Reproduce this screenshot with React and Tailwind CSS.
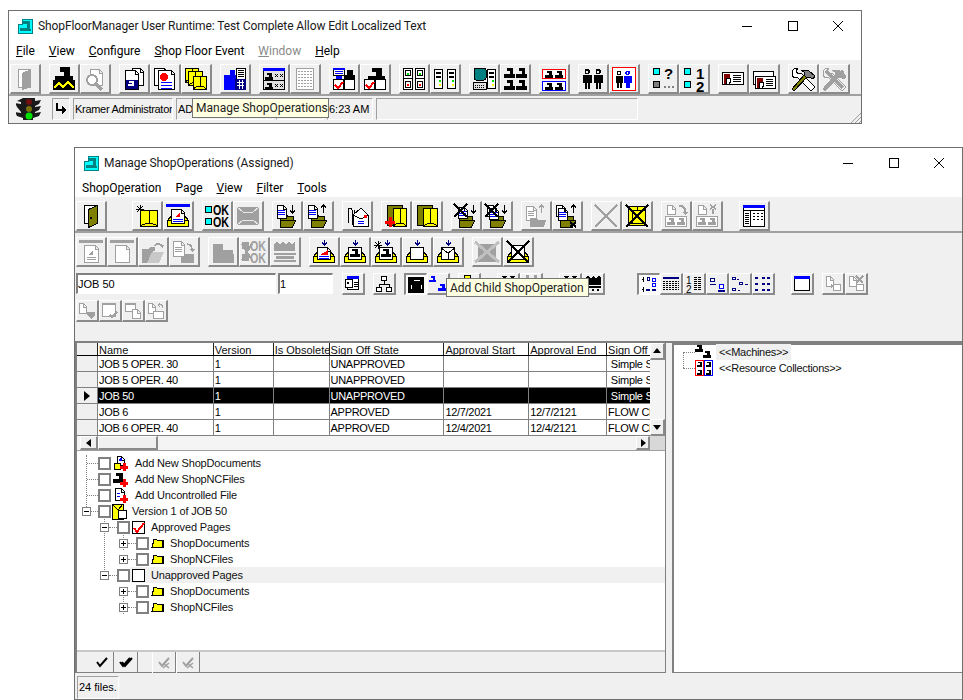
import React from 'react';

const Y = '#ffff00';
const OL = '#808000';
const NV = '#000080';
const BL = '#0000ff';
const RD = '#ff0000';
const CY = '#00ffff';
const GR = '#a0a0a0';

const Box = ({ x, y, w, h, f = '#fff', s = '#000' }) => (
  <rect x={x + 0.5} y={y + 0.5} width={w - 1} height={h - 1} fill={f} stroke={s} />
);
const Mach = ({ x = 0, y = 0, k = 1, c = '#000' }) => (
  <path transform={`translate(${x} ${y}) scale(${k})`} d="M3 0h7v6h2v4H0V6h6V3H3z" fill={c} />
);
const Lines = ({ x, y, w, n = 3, gap = 2, c = BL }) => (
  <path d={Array.from({ length: n }, (_, i) => `M${x} ${y + i * gap + 0.5}h${w}`).join('')} stroke={c} fill="none" />
);
const Doc = ({ x, y, w = 10, h = 14, s = '#000' }) => (
  <path d={`M${x + 0.5} ${y + 0.5}h${w - 4}l3 3v${h - 4}h-${w - 1}z M${x + w - 4} ${y + 1}v3h3`} fill="#fff" stroke={s} />
);
const Tray = ({ c = Y, s = '#000' }) => (
  <>
    <path d="M1.5 16.5l4-5h13l4 5v6h-21z" fill={c} stroke={s} />
    <path d="M2 16.5h5v3h10v-3h5" fill="none" stroke={s} />
  </>
);
const Crate = ({ x, y, w, h, f = Y, s = '#000' }) => (
  <>
    <Box x={x} y={y} w={w} h={h} f={f} s={s} />
    <path d={`M${x + w / 2} ${y}v${h - 4}M${x} ${y + h - 1}l${w / 2 - 2} -3h4l${w / 2 - 2} 3`} fill="none" stroke={s} />
  </>
);
const Folder = ({ x = 0, y = 0, c = OL, s = '#000' }) => (
  <path transform={`translate(${x} ${y})`} d="M.5 9.5v-6h6l1 2h6v4zM.5 9.5h15l-3 7h-12z" fill={c} stroke={s} />
);
const Arrow = ({ x, y, up = false, c = '#000', h = 6 }) => (
  <path
    d={up ? `M${x + 0.5} ${y + h}V${y}M${x - 2} ${y + 3}l2.5-3 2.5 3` : `M${x + 0.5} ${y}v${h}M${x - 2} ${y + h - 3}l2.5 3 2.5-3`}
    fill="none"
    stroke={c}
    strokeWidth="1.2"
  />
);
const Cross = ({ c = '#000', w = 2.5, a = 1, b = 23 }) => (
  <path d={`M${a} ${a}L${b} ${b}M${b} ${a}L${a} ${b}`} stroke={c} strokeWidth={w} fill="none" />
);
const Person = ({ x, c = '#000' }) => (
  <path
    transform={`translate(${x} 2)`}
    d="M2.5 0h3l1 1v3l-1 1h-3l-1-1V1zM0 6h8l1 1v7H7v6H5v-6H4v6H2v-6H0z M3 1.500h2v2.500h-2z"
    fill={c}
    fillRule="evenodd"
  />
);
const Tower = ({ x, y, led = '#00e000', led2 = Y }) => (
  <>
    <Box x={x} y={y} w={9} h={20} />
    <rect x={x + 2} y={y + 3} width={5} height={2} fill="#000" />
    <rect x={x + 2} y={y + 7} width={5} height={2} fill="#000" />
    <rect x={x + 5} y={y + 11} width={2} height={2} fill={led} />
    <rect x={x + 5} y={y + 15} width={2} height={2} fill={led2} />
  </>
);
const CheckBox = ({ x, y }) => (
  <>
    <Box x={x} y={y} w={11} h={11} />
    <path d={`M${x + 2} ${y + 6}l3 3 5-6`} stroke={RD} strokeWidth="2" fill="none" />
  </>
);
const Card = ({ x, y, w = 20 }) => (
  <>
    <Box x={x} y={y} w={w} h={13} />
    <path d={`M${x + 2} ${y + 2}h6v4l-3 6h-3z`} fill="#800000" />
    <path d={`M${x + 4} ${y + 6}h4l1 3-2 3h-3z`} fill="#fff" stroke="#000" />
    <Lines x={x + 11} y={y + 3} w={w - 14} n={4} c="#000" />
  </>
);
const Tools = ({ c1 = '#fff', c2 = OL, c3 = '#808080', s = '#000' }) => (
  <>
    <path d="M1 4l3-3h3L5 4l2 3 3-1 13 13v2l-2 2h-2L6 10l-2 1-3-2z" fill={c1} stroke={s} />
    <path d="M3 24l-2-2L14 7l3 2z" fill={c2} stroke={s} />
    <path d="M10 3h7l7 6-2 3-4-2-2 1-3-3V5z" fill={c3} stroke={s} />
  </>
);
const Ok = ({ y, c = CY, t = '#000' }) => (
  <>
    <Box x={0} y={y + 2} w={7} h={7} f={c} s={t} />
    <text x="8" y={y + 11} fontFamily="Liberation Sans, sans-serif" fontWeight="700" fontSize="14" textLength="16" lengthAdjust="spacingAndGlyphs" fill={t}>OK</text>
  </>
);

// big toolbar pictures are on a 24 grid, small ones on an 18 grid
const ICONS = {
  doorOff: (
    <>
      <Box x={5} y={2} w={13} h={19} s={GR} />
      <path d="M9 6l9-4v18l-9 3z" fill={GR} />
    </>
  ),
  door: (
    <>
      <Box x={5} y={1} w={13} h={19} />
      <path d="M9.500 5.500l9-4v18l-9 4z" fill={OL} stroke="#000" />
      <rect x={11} y={13} width={2} height={2} fill="#000" />
    </>
  ),
  machWave: (
    <>
      <Mach x={3} y={0} k={1.5} />
      <rect x={1} y={13} width={22} height={10} fill="#000" />
      <path d="M2 21l5-5 4 4 5-5 6 6" stroke={Y} strokeWidth="1.500" fill="none" />
    </>
  ),
  magOff: (
    <>
      <Doc x={7} y={2} w={13} h={17} s={GR} />
      <circle cx={9} cy={13} r={5} fill="#fff" stroke={GR} strokeWidth="2" />
      <path d="M13 17l6 6" stroke={GR} strokeWidth="3" />
    </>
  ),
  docsMach: (
    <>
      <Doc x={10} y={1} w={12} h={18} />
      <Doc x={3} y={3} w={14} h={20} />
      <rect x={4} y={13} width={12} height={9} fill={NV} />
      <path d="M7 14h5v5H6v-2h4v-1H7z" fill="#fff" />
    </>
  ),
  docsRed: (
    <>
      <Doc x={1} y={1} w={14} h={18} />
      <Doc x={5} y={3} w={17} h={20} />
      <circle cx={11} cy={10} r={4} fill={RD} />
      <Lines x={8} y={15} w={11} n={3} gap={3} />
    </>
  ),
  crates: (
    <>
      <Crate x={1} y={1} w={14} h={15} />
      <Crate x={4} y={4} w={15} h={15} />
      <Crate x={9} y={9} w={14} h={14} />
    </>
  ),
  calc: (
    <>
      <Box x={13} y={1} w={10} h={12} />
      <Lines x={15} y={3} w={6} n={4} c="#000" />
      <rect x={7} y={3} width={5} height={5} fill={BL} />
      <rect x={1} y={8} width={12} height={15} fill={BL} />
      <rect x={12} y={12} width={11} height={11} fill={NV} />
      <path d="M14 15h7M14 18h7M16 13v9M19 13v9" stroke="#fff" />
    </>
  ),
  tableMach: (
    <>
      <Box x={1} y={1} w={22} h={22} f="#e0e0e0" />
      <rect x={1} y={1} width={22} height={3} fill={BL} />
      <path d="M1 13.500h22" stroke="#000" />
      <Mach x={3} y={6} k={0.7} />
      <Mach x={3} y={16} k={0.7} />
      <path d="M13 7l3 3m0-3l-3 3M18 7l3 3m0-3l-3 3M13 17l3 3m0-3l-3 3M18 17l3 3m0-3l-3 3" stroke="#000" />
    </>
  ),
  tableOff: (
    <>
      <Box x={3} y={1} w={18} h={22} s={GR} />
      <path d="M5 4h14M5 7h14M5 10h14M5 13h14M5 16h14M5 19h14" stroke={GR} strokeDasharray="2 1" />
    </>
  ),
  planCheck: (
    <>
      <Box x={1} y={1} w={12} h={8} />
      <rect x={1} y={1} width={12} height={2} fill={BL} />
      <Lines x={3} y={4} w={8} n={2} c={BL} />
      <path d="M4 9h6v3H4z" fill={BL} />
      <Mach x={12} y={3} k={0.9} />
      <rect x={15} y={5} width={6} height={8} fill="#000" />
      <CheckBox x={1} y={12} />
      <Box x={12} y={12} w={11} h={11} />
    </>
  ),
  machCheck: (
    <>
      <Mach x={5} y={1} k={1.4} />
      <CheckBox x={1} y={12} />
      <Box x={12} y={12} w={11} h={11} />
    </>
  ),
  panel4: (
    <>
      <Box x={1} y={1} w={10} h={22} />
      <Box x={13} y={1} w={10} h={22} />
      <path d="M1 11.500h10M13 11.500h10" stroke="#000" />
      <Box x={3} y={3} w={6} h={6} f="none" />
      <Box x={15} y={3} w={6} h={6} f="none" />
      <Box x={3} y={14} w={6} h={7} f="none" />
      <Box x={15} y={14} w={6} h={7} f="none" />
      <rect x={5} y={6} width={2} height={2} fill="#00e000" />
      <rect x={17} y={6} width={2} height={2} fill="#00e000" />
      <rect x={5} y={17} width={2} height={2} fill={RD} />
      <rect x={17} y={17} width={2} height={2} fill={RD} />
    </>
  ),
  towers: (
    <>
      <Tower x={1} y={2} />
      <Tower x={14} y={2} />
    </>
  ),
  computer: (
    <>
      <rect x={2} y={1} width={12} height={12} rx={2} fill="#008080" stroke="#000" />
      <Box x={1} y={15} w={14} h={8} f="#e0e0e0" />
      <path d="M3 18h10M3 20h10" stroke="#000" strokeDasharray="1 1" />
      <Tower x={15} y={2} />
    </>
  ),
  machs4: (
    <>
      <Mach x={1} y={1} k={0.92} />
      <Mach x={13} y={1} k={0.92} />
      <Mach x={1} y={13} k={0.92} />
      <Mach x={13} y={13} k={0.92} />
      <rect x={1} y={7} width={11} height={4} />
      <rect x={13} y={7} width={11} height={4} />
      <rect x={1} y={19} width={11} height={4} />
      <rect x={13} y={19} width={11} height={4} />
    </>
  ),
  machsRB: (
    <>
      <Box x={0} y={2} w={24} h={10} s={RD} />
      <Box x={0} y={14} w={24} h={10} s={BL} />
      <Mach x={3} y={4} k={0.65} />
      <Mach x={13} y={4} k={0.65} />
      <Mach x={3} y={16} k={0.65} />
      <Mach x={13} y={16} k={0.65} />
    </>
  ),
  people: (
    <>
      <Person x={2} />
      <Person x={13} />
    </>
  ),
  peopleRB: (
    <>
      <Box x={0} y={0} w={24} h={24} s={RD} />
      <g transform="translate(2 2) scale(.85)">
        <Person x={2} />
        <Person x={12} c={BL} />
      </g>
    </>
  ),
  cyanQ: (
    <>
      <Box x={2} y={1} w={7} h={7} f={CY} />
      <Box x={2} y={14} w={7} h={7} f="#808080" />
      <text x="13" y="12" fontFamily="Liberation Sans, sans-serif" fontWeight="700" fontSize="15" fill="#000">?</text>
      <path d="M13 20h2M17 20h2M21 20h2" stroke="#808080" strokeWidth="2" />
    </>
  ),
  cyan12: (
    <>
      <Box x={2} y={1} w={7} h={7} f={CY} />
      <Box x={2} y={14} w={7} h={7} f={CY} />
      <text x="14" y="12" fontFamily="Liberation Sans, sans-serif" fontWeight="700" fontSize="15" fill="#000">1</text>
      <text x="14" y="25" fontFamily="Liberation Sans, sans-serif" fontWeight="700" fontSize="15" fill="#000">2</text>
    </>
  ),
  card: <Card x={1} y={5} w={22} />,
  cards: (
    <>
      <Box x={1} y={4} w={21} h={14} />
      <Card x={3} y={9} w={21} />
    </>
  ),
  tools: <Tools />,
  toolsOff: (
    <>
      <Tools c1="#f0f0f0" c2={GR} c3={GR} s={GR} />
      <Cross c={GR} w={3} a={4} b={21} />
    </>
  ),
  starCrate: (
    <>
      <path d="M5 1v8M1 5h8M2 2l6 6M8 2L2 8" stroke="#000" />
      <Crate x={5} y={6} w={18} h={17} />
    </>
  ),
  barTray: (
    <>
      <rect x={0} y={0} width={24} height={3} fill={BL} />
      <Tray />
      <Doc x={5} y={5} w={14} h={15} />
      <path d="M9 13l5-5v5z" fill={RD} />
      <Lines x={7} y={15} w={10} n={2} />
    </>
  ),
  okOk: (
    <>
      <Ok y={0} />
      <Ok y={12} />
    </>
  ),
  boxOff: (
    <>
      <rect x={1} y={3} width={22} height={18} fill={GR} />
      <path d="M1 3l6 5h10l6-5M1 21l6-5h10l6 5" stroke="#e8e8e8" fill="none" />
    </>
  ),
  folderDown: (
    <>
      <Folder x={5} y={7} />
      <Doc x={2} y={1} w={10} h={14} />
      <Lines x={3} y={6} w={7} n={3} />
      <Arrow x={17} y={1} h={8} />
    </>
  ),
  folderUp: (
    <>
      <Folder x={5} y={7} />
      <Doc x={2} y={1} w={10} h={14} />
      <Lines x={3} y={6} w={7} n={3} />
      <Arrow x={17} y={1} up h={8} />
    </>
  ),
  clipMail: (
    <>
      <path d="M3 19V6a2 2 0 014 0v14a1 1 0 002 0V6" fill="none" stroke="#000" />
      <path d="M8 11l8-7 7 7v11H8z" fill="#fff" stroke="#000" />
      <path d="M8 11l8 4 7-4" fill="none" stroke="#000" />
      <rect x={19} y={11} width={3} height={3} fill={RD} />
      <Lines x={13} y={17} w={6} n={2} />
    </>
  ),
  cratePlus: (
    <>
      <rect x={3} y={1} width={15} height={20} fill={OL} stroke="#000" />
      <Crate x={9} y={4} w={14} h={19} />
      <path d="M6 13v10M1 18h10" stroke={RD} strokeWidth="3" />
    </>
  ),
  cratePair: (
    <>
      <rect x={2} y={1} width={15} height={20} fill={OL} stroke="#000" />
      <Crate x={8} y={4} w={15} h={19} />
    </>
  ),
  xFolder: (
    <>
      <Folder x={5} y={7} />
      <Doc x={4} y={3} w={10} h={12} />
      <Lines x={5} y={7} w={7} n={3} />
      <Arrow x={19} y={1} h={8} />
      <path d="M0 0l13 13M13 0L0 13" stroke="#000" strokeWidth="2" />
    </>
  ),
  xFolder2: (
    <>
      <Folder x={5} y={7} />
      <Doc x={2} y={1} w={10} h={12} />
      <Doc x={4} y={4} w={10} h={12} />
      <Lines x={5} y={8} w={7} n={3} />
      <Arrow x={19} y={1} h={8} />
      <path d="M0 0l13 13M13 0L0 13" stroke="#000" strokeWidth="2" />
    </>
  ),
  upOff: (
    <>
      <Doc x={2} y={2} w={11} h={15} s={GR} />
      <Lines x={4} y={7} w={6} n={3} c={GR} />
      <Arrow x={17} y={1} up c={GR} h={8} />
      <path d="M6 14h6l2 2h8l-2 7H6z" fill={GR} />
    </>
  ),
  upX: (
    <>
      <Folder x={5} y={7} />
      <Doc x={1} y={1} w={10} h={12} />
      <Doc x={3} y={4} w={10} h={13} />
      <Lines x={4} y={8} w={7} n={3} />
      <Arrow x={18} y={1} up h={8} />
      <path d="M15 18l6 5m0-5l-6 5" stroke="#000" strokeWidth="2" />
    </>
  ),
  xOff: <Cross c={GR} w={2} />,
  crateX: (
    <>
      <Crate x={3} y={2} w={18} h={20} />
      <Box x={7} y={6} w={14} h={14} f={Y} />
      <Cross />
    </>
  ),
  docDownMachOff: (
    <>
      <Doc x={3} y={1} w={9} h={10} s={GR} />
      <path d="M15 2h3l3 3v4" fill="none" stroke={GR} strokeWidth="1.500" />
      <path d="M18 8l3 3 3-3" fill={GR} />
      <Box x={1} y={12} w={22} h={11} s={GR} />
      <Mach x={3} y={14} k={0.7} c={GR} />
      <Mach x={13} y={14} k={0.7} c={GR} />
    </>
  ),
  docXMachOff: (
    <>
      <Doc x={3} y={1} w={9} h={10} s={GR} />
      <path d="M15 1l6 4m0-4l-6 4M18 5v5" stroke={GR} strokeWidth="1.500" />
      <Box x={1} y={12} w={22} h={11} s={GR} />
      <Mach x={3} y={14} k={0.7} c={GR} />
      <Mach x={13} y={14} k={0.7} c={GR} />
    </>
  ),
  tableWin: (
    <>
      <Box x={1} y={1} w={22} h={22} />
      <rect x={1} y={1} width={22} height={3} fill={BL} />
      <path d="M1 6.500h22M8.500 6v16" stroke="#000" />
      <Lines x={3} y={9} w={4} n={6} gap={2} c="#000" />
      <path d="M11 9h2M15 9h2M19 9h2M11 12h2M15 12h2M19 12h2M11 15h2M15 15h2M19 15h2" stroke="#000" />
    </>
  ),
  barDocOff: (
    <>
      <rect x={0} y={0} width={24} height={3} fill={GR} />
      <Doc x={5} y={5} w={15} h={18} s={GR} />
      <path d="M9 15l5-5v5z" fill={GR} />
      <Lines x={8} y={17} w={9} n={2} c={GR} />
    </>
  ),
  barBlankOff: (
    <>
      <rect x={0} y={0} width={24} height={3} fill={GR} />
      <Doc x={5} y={5} w={15} h={18} s={GR} />
    </>
  ),
  folderOff: (
    <>
      <path d="M1 9h7l1-2h5v4h-2L6 23H1z" fill={GR} />
      <path d="M6 23l5-11h12l-5 11z" fill="#c8c8c8" />
      <path d="M13 6c3-3 6-3 8 0" fill="none" stroke={GR} strokeWidth="1.500" />
      <path d="M19 7l3 1 1-3" fill={GR} />
    </>
  ),
  docsArrowOff: (
    <>
      <Doc x={1} y={1} w={12} h={16} s={GR} />
      <Lines x={3} y={7} w={7} n={3} c={GR} />
      <path d="M15 4c3 0 5 2 5 6" fill="none" stroke={GR} strokeWidth="1.500" />
      <path d="M17 9l3 3 3-3" fill={GR} />
      <path d="M9 17h4v-3h9v9H9z" fill={GR} />
    </>
  ),
  machBoxOff: (
    <>
      <rect x={2} y={4} width={10} height={10} fill={GR} />
      <rect x={2} y={14} width={21} height={9} fill={GR} />
      <rect x={12} y={10} width={10} height={5} fill={GR} />
    </>
  ),
  okMachOff: (
    <>
      <Ok y={0} c={GR} t={GR} />
      <Ok y={12} c={GR} t={GR} />
      <path d="M0 4l10 16M10 4L0 20" stroke={GR} strokeWidth="2" />
    </>
  ),
  carOff: (
    <>
      <path d="M1 4l3-2 3 2 3-2 3 2 3-2 3 2 3-2v9H1z" fill={GR} />
      <rect x={1} y={13} width={22} height={2} fill={GR} />
      <rect x={3} y={16} width={18} height={3} fill={GR} />
      <path d="M1 21h22" stroke={GR} strokeWidth="2" />
    </>
  ),
  trayChart: (
    <>
      <Arrow x={12} y={0} c={NV} h={5} />
      <Tray />
      <Doc x={5} y={7} w={14} h={13} />
      <path d="M8 15l8-5v5z" fill={RD} />
      <Lines x={7} y={16} w={10} n={2} />
    </>
  ),
  trayMach: (
    <>
      <Arrow x={12} y={0} c={NV} h={5} />
      <Tray />
      <Box x={5} y={7} w={14} h={13} />
      <Mach x={7} y={9} k={0.8} />
    </>
  ),
  trayStar: (
    <>
      <path d="M4 1v8M0 5h8M1 2l6 6M7 2L1 8" stroke="#000" />
      <Arrow x={13} y={0} c={NV} h={5} />
      <Tray />
      <Box x={5} y={7} w={14} h={13} />
      <Mach x={7} y={9} k={0.8} />
    </>
  ),
  trayBlank: (
    <>
      <Arrow x={12} y={0} c={NV} h={5} />
      <Tray />
      <Box x={5} y={7} w={14} h={13} />
    </>
  ),
  trayEnv: (
    <>
      <Arrow x={12} y={0} c={NV} h={5} />
      <Tray />
      <Box x={5} y={7} w={14} h={13} />
      <path d="M5 8l7 5 7-5M12 13v7" stroke="#000" fill="none" />
    </>
  ),
  crateOffX: (
    <>
      <rect x={3} y={4} width={18} height={18} fill={GR} />
      <path d="M0 2l24 20M24 2L0 22" stroke="#c0c0c0" strokeWidth="3" />
    </>
  ),
  trayX: (
    <>
      <Tray />
      <Box x={5} y={5} w={14} h={15} />
      <Cross w={2} />
    </>
  ),
  sTableA: (
    <>
      <Box x={3} y={1} w={12} h={14} />
      <rect x={3} y={1} width={12} height={3} fill={BL} />
      <Box x={1} y={4} w={8} h={9} f="#fff" />
      <path d="M3 7l2 2m0-2L3 9" stroke="#000" />
      <Lines x={10} y={7} w={4} n={3} c="#000" />
    </>
  ),
  sOrg: (
    <>
      <Box x={6} y={1} w={6} h={5} />
      <Box x={1} y={12} w={6} h={5} />
      <Box x={11} y={12} w={6} h={5} />
      <path d="M9 6v3M4 12V9.500h10V12" stroke="#000" fill="none" />
    </>
  ),
  sMachBlack: (
    <>
      <rect x={1} y={1} width={16} height={16} fill="#000" />
      <Mach x={4} y={4} k={0.9} c="#fff" />
      <Mach x={4.500} y={4.500} k={0.8} />
    </>
  ),
  sMachBlue: (
    <>
      <Mach x={0} y={1} k={0.6} c={BL} />
      <Mach x={9} y={9} k={0.7} c={BL} />
    </>
  ),
  sYellow: <Box x={4} y={0} w={7} h={6} f={Y} />,
  sHidden: <path d="M4 1l3 4M7 1L4 5M12 1l3 4M15 1l-3 4" stroke="#000" strokeWidth="2" />,
  sHidden2: <path d="M4 1h3M12 1h3M4 3h3M12 3h3" stroke={GR} strokeWidth="2" />,
  sCar: (
    <>
      <path d="M1 3l3-2 3 2 2-2 3 2 3-2 2 2v7H1z" fill="#000" />
      <rect x={1} y={11} width={16} height={2} fill="#000" />
      <path d="M3 15h2M8 15h2M13 15h2" stroke="#000" strokeWidth="2" />
    </>
  ),
  sTree: (
    <>
      <path d="M2 3h2M2 13h2M3 1v5M3 11v5" stroke="#000" />
      <Box x={7} y={1} w={3} h={4} s={NV} />
      <Box x={12} y={2} w={4} h={4} s={BL} />
      <Box x={12} y={7} w={4} h={4} s={BL} />
      <path d="M6 14h4M12 14h4" stroke={NV} strokeWidth="2" />
    </>
  ),
  sGrid: (
    <>
      <rect x={1} y={2} width={16} height={2} fill={NV} />
      <path d="M1 6h16M1 8h16M1 10h16M1 12h16M1 14h16" stroke="#000" strokeDasharray="2 1" />
    </>
  ),
  sNums: (
    <>
      <text x="1" y="9" fontFamily="Liberation Sans, sans-serif" fontSize="10" fill="#000">1</text>
      <text x="1" y="18" fontFamily="Liberation Sans, sans-serif" fontSize="10" fill="#000">2</text>
      <path d="M9 2h8M9 4h8M9 6h8M9 8h8M9 10h8M9 12h8M9 14h8" stroke="#000" strokeDasharray="3 1" />
    </>
  ),
  sLarge: (
    <>
      <Box x={2} y={3} w={5} h={4} s={NV} />
      <path d="M2 9h6" stroke={NV} />
      <Box x={11} y={9} w={5} h={5} s={BL} />
      <path d="M10 16h7" stroke={NV} strokeWidth="2" />
    </>
  ),
  sLinks: (
    <>
      <Box x={1} y={2} w={4} h={3} s={NV} />
      <Box x={8} y={7} w={4} h={3} s={NV} />
      <Box x={1} y={13} w={4} h={3} s={NV} />
      <path d="M6 4h2M14 9h3M7 15h2" stroke={NV} />
    </>
  ),
  sList: (
    <>
      <path d="M1 3h4M8 3h3M13 3h4M1 9h4M8 9h3M13 9h4M1 15h4M8 15h3M13 15h4" stroke={NV} strokeWidth="2" strokeDasharray="3 1" />
    </>
  ),
  sWin: (
    <>
      <Box x={1} y={1} w={16} h={15} />
      <rect x={1} y={1} width={16} height={3} fill={BL} />
    </>
  ),
  sDocsOff: (
    <>
      <Doc x={2} y={1} w={8} h={11} s={GR} />
      <Box x={9} y={9} w={8} h={7} s={GR} />
      <path d="M7 9l3 2-3 2z" fill={GR} />
    </>
  ),
  sXOff: (
    <>
      <Doc x={2} y={1} w={8} h={11} s={GR} />
      <Box x={9} y={9} w={8} h={7} s={GR} />
      <path d="M9 1l7 7m0-7L9 8" stroke={GR} strokeWidth="2" />
    </>
  ),
  sRowA: (
    <>
      <Doc x={1} y={1} w={8} h={11} s={GR} />
      <path d="M9 10h8v3l-4 4-4-4z" fill={GR} />
    </>
  ),
  sRowB: (
    <>
      <Box x={1} y={1} w={14} h={14} s={GR} />
      <rect x={1} y={1} width={14} height={2} fill={GR} />
      <path d="M9 13l2 2 5-5" stroke={GR} strokeWidth="2" fill="none" />
    </>
  ),
  sRowC: (
    <>
      <Box x={1} y={1} w={11} h={9} s={GR} />
      <rect x={1} y={1} width={11} height={2} fill={GR} />
      <Doc x={8} y={7} w={9} h={10} s={GR} />
    </>
  ),
  sRowD: (
    <>
      <Doc x={1} y={1} w={8} h={11} s={GR} />
      <path d="M11 3c3-1 5 0 5 3M11 3l2-2M11 3l2 2" stroke={GR} fill="none" />
      <Box x={6} y={9} w={11} h={8} s={GR} />
    </>
  ),
};

const Icon = ({ name, size = 24 }) => (
  <svg viewBox={`0 0 ${size} ${size}`} width={size} height={size} shapeRendering="crispEdges" className="block overflow-visible">
    {ICONS[name]}
  </svg>
);

function Btn({ icon, small = false, pressed = false }) {
  return (
    <div
      className={`flex shrink-0 items-center justify-center ${small ? 'h-[22px] w-[23px]' : 'h-[30px] w-[31px]'} ${
        pressed
          ? 'border-t-2 border-l-2 border-r border-b border-t-[#8a8a8a] border-l-[#8a8a8a] border-r-white border-b-white bg-[#fafafa]'
          : 'border-t border-l border-r-2 border-b-2 border-t-white border-l-white border-r-[#8a8a8a] border-b-[#8a8a8a] bg-[#f0f0f0]'
      }`}
    >
      {icon && <Icon name={icon} size={small ? 18 : 24} />}
    </div>
  );
}

function Group({ items, small }) {
  return (
    <div className="flex">
      {items.map((it, i) => (
        <Btn key={i} icon={it.replace('!', '')} small={small} pressed={it.startsWith('!')} />
      ))}
    </div>
  );
}

const AppIcon = () => (
  <svg viewBox="0 0 16 16" width="16" height="16" shapeRendering="crispEdges" className="shrink-0">
    <path d="M5 1h10v14H1V6h4z" fill={CY} stroke="#008080" />
    <path d="M6 3h7v8h1v2H3v-3h7V6H6z" fill="#008080" />
  </svg>
);

function TitleBar({ title }) {
  return (
    <div className="flex h-[30px] items-center bg-white">
      <div className="ml-2 flex min-w-0 flex-1 items-center gap-[5px]">
        <AppIcon />
        <span className="whitespace-nowrap font-['Roboto',sans-serif] text-[12px] tracking-[-0.1px] text-[#1a1a1a]">{title}</span>
      </div>
      <div className="flex h-full">
        <div className="flex w-[46px] items-center justify-center">
          <svg width="10" height="10" shapeRendering="crispEdges"><path d="M0 5.500h10" stroke="#000" /></svg>
        </div>
        <div className="flex w-[45px] items-center justify-center">
          <svg width="10" height="10" shapeRendering="crispEdges"><rect x=".5" y=".5" width="9" height="9" fill="none" stroke="#000" /></svg>
        </div>
        <div className="flex w-[46px] items-center justify-center">
          <svg width="10" height="10"><path d="M0 0l10 10M10 0L0 10" stroke="#000" /></svg>
        </div>
      </div>
    </div>
  );
}

function Menu({ items }) {
  return (
    <div className="flex h-[19px] items-center gap-[14px] bg-white pl-[7px] font-['Roboto',sans-serif] text-[12px] text-black">
      {items.map(([pre, key, post, off]) => (
        <span key={pre + key + post} className={off ? 'text-[#8a8a8a]' : ''}>
          {pre}<u>{key}</u>{post}
        </span>
      ))}
    </div>
  );
}

const Tip = ({ className, children }) => (
  <div className={`absolute z-10 flex items-center whitespace-nowrap border border-[#767676] bg-[#ffffe1] px-[3px] font-['Roboto',sans-serif] text-[12px] text-[#222] ${className}`}>
    {children}
  </div>
);

const Cell = ({ className = '', children }) => (
  <div className={`flex items-center overflow-hidden whitespace-nowrap border border-t-[#a0a0a0] border-l-[#a0a0a0] border-r-white border-b-white pl-[1px] font-['Liberation_Sans',sans-serif] text-[11px] text-black ${className}`}>
    {children}
  </div>
);

const TOP_BAR = [
  ['doorOff'], ['machWave', 'magOff'], ['docsMach', 'docsRed', 'crates'], ['calc'],
  ['tableMach', 'tableOff'], ['planCheck', 'machCheck'], ['panel4', 'towers'], ['computer', 'machs4'],
  ['machsRB'], ['people', 'peopleRB'], ['cyanQ', 'cyan12'], ['card', 'cards'], ['tools', 'toolsOff'],
];

const COLS = [
  ['Name', 'w-[116px]'], ['Version', 'w-[60px]'], ['Is Obsolete', 'w-[56px]'], ['Sign Off State', 'w-[115px]'],
  ['Approval Start', 'w-[85px]'], ['Approval End', 'w-[78px]'], ['Sign Off', 'w-[44px]'],
];

const ROWS = [
  ['JOB 5 OPER. 30', '1', '', 'UNAPPROVED', '', '', ' Simple Sign'],
  ['JOB 5 OPER. 40', '1', '', 'UNAPPROVED', '', '', ' Simple Sign'],
  ['JOB 50', '1', '', 'UNAPPROVED', '', '', ' Simple Sign'],
  ['JOB 6', '1', '', 'APPROVED', '12/7/2021', '12/7/2121', 'FLOW CHART'],
  ['JOB 6 OPER. 40', '1', '', 'APPROVED', '12/4/2021', '12/4/2121', 'FLOW CHART'],
];

const Scroll = ({ d, className = '' }) => (
  <div className={`flex items-center justify-center border-t border-l border-r-2 border-b-2 border-t-white border-l-white border-r-[#8a8a8a] border-b-[#8a8a8a] bg-[#f0f0f0] ${className}`}>
    <svg width="8" height="8"><path d={d} fill="#000" /></svg>
  </div>
);

function JobGrid() {
  return (
    <div className="flex h-[108px] flex-col border-b border-[#a0a0a0] bg-white">
      <div className="flex h-[93px]">
        <div className="flex w-[574px] flex-col overflow-hidden">
          <div className="flex h-[13px] items-center border-b border-black">
            <div className="h-full w-[20px] bg-[#f0f0f0]" />
            {COLS.map(([label, w]) => (
              <div key={label} className={`${w} h-full overflow-hidden whitespace-nowrap border-l border-[#222] pl-[1px] font-['Liberation_Sans',sans-serif] text-[11px] leading-[15px] text-[#111]`}>
                {label}
              </div>
            ))}
          </div>
          {ROWS.map((row, r) => (
            <div key={r} className={`flex h-[16px] border-b border-[#808080] ${r === 2 ? 'bg-black text-white' : 'text-black'}`}>
              <div className="flex h-full w-[20px] items-center justify-center bg-[#f0f0f0]">
                {r === 2 && <svg width="8" height="10"><path d="M1 0l6 5-6 5z" fill="#000" /></svg>}
              </div>
              {row.map((v, c) => (
                <div key={c} className={`${COLS[c][1]} h-full overflow-hidden whitespace-pre border-l border-[#808080] pl-[1px] font-['Liberation_Sans',sans-serif] text-[11px] leading-[16px] tracking-[-0.3px]`}>
                  {v}
                </div>
              ))}
            </div>
          ))}
        </div>
        <div className="flex w-[15px] flex-col bg-[#f4f4f4]">
          <Scroll d="M4 1l4 5H0z" className="h-[17px]" />
          <div className="flex-1" />
          <Scroll d="M0 2h8L4 7z" className="h-[17px]" />
        </div>
      </div>
      <div className="flex flex-1 bg-[#f4f4f4] pl-[3px]">
        <Scroll d="M6 0v8L1 4z" className="w-[18px]" />
        <div className="w-[60px] border-t border-l border-r-2 border-b-2 border-t-white border-l-white border-r-[#8a8a8a] border-b-[#8a8a8a] bg-[#f0f0f0]" />
        <div className="flex-1" />
        <Scroll d="M2 0l5 4-5 4z" className="w-[14px]" />
        <div className="w-[15px] bg-[#d8d8d8]" />
      </div>
    </div>
  );
}

const Expander = ({ open }) => (
  <svg width="9" height="9" shapeRendering="crispEdges" className="shrink-0 bg-white">
    <rect x=".5" y=".5" width="8" height="8" fill="#fff" stroke="#808080" />
    <path d={open ? 'M2 4.500h5' : 'M2 4.500h5M4.500 2v5'} stroke="#000" />
  </svg>
);

const TreeBox = () => <div className="h-[13px] w-[13px] shrink-0 border-2 border-[#808080] bg-white" />;

const TREE_ICONS = {
  addDoc: (
    <>
      <Doc x={4} y={0} w={8} h={10} />
      <path d="M7 2l2 0v3H6z" fill={BL} />
      <rect x={1} y={7} width={6} height={6} fill={Y} stroke="#000" />
      <path d="M11 7v8M7 11h8" stroke={RD} strokeWidth="3" />
    </>
  ),
  addNc: (
    <>
      <Mach x={0} y={1} k={1} />
      <path d="M11 7v8M7 11h8" stroke={RD} strokeWidth="3" />
    </>
  ),
  addFile: (
    <>
      <Doc x={2} y={0} w={10} h={13} />
      <path d="M4 5h3M4 8h3" stroke={BL} />
      <path d="M11 7v8M7 11h8" stroke={RD} strokeWidth="3" />
    </>
  ),
  version: (
    <>
      <rect x={0} y={0} width={11} height={15} fill={Y} stroke="#000" />
      <path d="M0 0l6 6 5-6" stroke="#000" fill="none" />
      <Box x={6} y={6} w={9} h={9} />
    </>
  ),
  approved: (
    <>
      <Box x={1} y={1} w={13} h={13} />
      <path d="M3 8l3 4 7-9" stroke={RD} strokeWidth="2" fill="none" />
    </>
  ),
  unapproved: <Box x={1} y={1} w={13} h={13} />,
  folder: <path d="M2.500 5.500v-2h3l1 1h5.500v7h-11z" fill={Y} stroke="#000" strokeWidth="1.200" />,
};

const TreeIcon = ({ name }) => (
  <svg viewBox="0 0 15 15" width="15" height="15" shapeRendering="crispEdges" className="shrink-0 overflow-visible">
    {TREE_ICONS[name]}
  </svg>
);

const TREE = [
  { d: 0, icon: 'addDoc', label: 'Add New ShopDocuments', gapL: 'ml-[2px]', gapT: 'ml-[7px]' },
  { d: 0, icon: 'addNc', label: 'Add New ShopNCFiles', gapL: 'ml-[2px]', gapT: 'ml-[7px]' },
  { d: 0, icon: 'addFile', label: 'Add Uncontrolled File', gapL: 'ml-[2px]', gapT: 'ml-[7px]' },
  { d: 0, exp: 'open', icon: 'version', label: 'Version 1 of JOB 50', gapL: 'ml-[1px]', gapT: 'ml-[5px]' },
  { d: 1, exp: 'open', icon: 'approved', label: 'Approved Pages', gapL: 'ml-[1px]', gapT: 'ml-[5px]' },
  { d: 2, exp: 'closed', icon: 'folder', label: 'ShopDocuments', gapL: 'ml-[2px]', gapT: 'ml-[4px]' },
  { d: 2, exp: 'closed', icon: 'folder', label: 'ShopNCFiles', gapL: 'ml-[2px]', gapT: 'ml-[4px]' },
  { d: 1, exp: 'open', icon: 'unapproved', label: 'Unapproved Pages', gapL: 'ml-[1px]', gapT: 'ml-[5px]', sel: true },
  { d: 2, exp: 'closed', icon: 'folder', label: 'ShopDocuments', gapL: 'ml-[2px]', gapT: 'ml-[4px]' },
  { d: 2, exp: 'closed', icon: 'folder', label: 'ShopNCFiles', gapL: 'ml-[2px]', gapT: 'ml-[4px]' },
];

function TreeRow({ row }) {
  return (
    <div className="relative flex h-4 items-center">
      {row.d === 0 && !row.exp && <div className="w-[10px] shrink-0" />}
      {row.d === 0 && !row.exp && <div className="h-0 w-[11px] shrink-0 border-t border-dotted border-[#808080]" />}
      {row.d === 0 && row.exp && <div className="w-[5px] shrink-0" />}
      {row.d === 1 && <div className="w-[23px] shrink-0" />}
      {row.d === 2 && <div className="w-[42px] shrink-0" />}
      {row.exp && <Expander open={row.exp === 'open'} />}
      {row.exp && <div className={`h-0 shrink-0 border-t border-dotted border-[#808080] ${row.d === 0 ? 'w-[7px]' : 'w-[8px]'}`} />}
      <TreeBox />
      <div className={`flex h-full flex-1 items-center ${row.sel ? 'bg-[#f0f0f0]' : ''}`}>
        <div className={row.gapL}><TreeIcon name={row.icon} /></div>
        <span className={`${row.gapT} whitespace-nowrap font-['Liberation_Sans',sans-serif] text-[11px] tracking-[-0.15px] text-[#111]`}>{row.label}</span>
      </div>
    </div>
  );
}

function FileTree() {
  return (
    <div className="relative flex-1 bg-white pt-[4px]">
      <div className="absolute left-[9px] top-[4px] h-[56px] border-l border-dotted border-[#808080]" />
      <div className="absolute left-[27px] top-[63px] h-[64px] border-l border-dotted border-[#808080]" />
      <div className="absolute left-[46px] top-[79px] h-[20px] border-l border-dotted border-[#808080]" />
      <div className="absolute left-[46px] top-[143px] h-[20px] border-l border-dotted border-[#808080]" />
      {TREE.map((row, i) => <TreeRow key={i} row={row} />)}
    </div>
  );
}

const FlatBtn = ({ d, off }) => (
  <div className={`flex h-[21px] w-[24px] items-center justify-center border-r border-[#808080] ${off ? 'border-l border-l-white' : ''}`}>
    <svg width="16" height="14" className="block">
      {off ? (
        <>
          <path d={d} stroke={GR} strokeWidth="2" fill="none" />
          <path d="M7 8l6 5m0-5l-6 5" stroke={GR} strokeWidth="1.500" />
        </>
      ) : (
        <path d={d} stroke="#000" strokeWidth="2" fill="none" />
      )}
    </svg>
  </div>
);

export default function App() {
  return (
    <div className="relative h-[700px] w-[963px] overflow-hidden bg-white">
      {/* runtime window */}
      <div className="absolute left-[8px] top-[10px] flex h-[114px] w-[854px] flex-col border border-[#6f6f6f] bg-[#f0f0f0]">
        <TitleBar title="ShopFloorManager User Runtime: Test Complete Allow Edit Localized Text" />
        <Menu items={[['', 'F', 'ile'], ['', 'V', 'iew'], ['', 'C', 'onfigure'], ['', 'S', 'hop Floor Event'], ['', 'W', 'indow', true], ['', 'H', 'elp']]} />
        <div className="flex h-[36px] shrink-0 gap-2 border-b-2 border-[#a0a0a0] pl-[1px] pt-[4px]">
          {TOP_BAR.map((g, i) => <Group key={i} items={g} />)}
        </div>
        <div className="relative flex flex-1 items-start gap-[3px] pl-[1px] pt-[2px]">
          <div className="flex h-[22px] w-[38px] items-center justify-center">
            <svg width="26" height="22" viewBox="0 0 26 22">
              <path d="M7 0h12v3l6-1-2 4-4 2v1l6-1-2 4-4 2v1l6-1-2 4-6 2v2H7v-2l-6-2-2-4 6 1v-1L1 9-1 5l6 1V4L1 3z" fill="#1a1a1a" />
              <circle cx="13" cy="4" r="3" fill="#701010" />
              <circle cx="13" cy="11" r="3" fill="#7a7010" />
              <circle cx="13" cy="18" r="3.500" fill="#00e000" />
            </svg>
          </div>
          <div className="ml-[1px] flex h-[22px] w-[18px] items-center justify-center border border-t-[#a0a0a0] border-l-[#a0a0a0] border-r-white border-b-white">
            <svg width="12" height="12" viewBox="0 0 12 12" shapeRendering="crispEdges"><path d="M1 0h2v6h4V3l4 4-4 4V8H1z" fill="#000" /></svg>
          </div>
          <Cell className="h-[22px] w-[100px] tracking-[-0.3px]">Kramer Administrator</Cell>
          <Cell className="h-[22px] w-[97px]">AD</Cell>
          <Cell className="h-[22px] w-[48px]" />
          <Cell className="h-[22px] w-[46px]">6:23 AM</Cell>
          <Cell className="h-[22px] w-[262px]" />
          <svg width="10" height="10" className="absolute bottom-0 right-0">
            <path d="M10 0L0 10M10 4l-6 6M10 8l-2 2" stroke="#a0a0a0" />
          </svg>
        </div>
        <Tip className="left-[183px] top-[87px] h-[20px] w-[137px]">Manage ShopOperations</Tip>
      </div>

      {/* operations window */}
      <div className="absolute left-[74px] top-[147px] flex h-[553px] w-[889px] flex-col border border-[#6f6f6f] bg-[#f0f0f0]">
        <TitleBar title="Manage ShopOperations (Assigned)" />
        <Menu items={[['ShopO', 'p', 'eration'], ['Pa', 'g', 'e'], ['', 'V', 'iew'], ['', 'F', 'ilter'], ['', 'T', 'ools']]} />

        <div className="flex h-[36px] shrink-0 border-b-2 border-[#a0a0a0] pl-[1px] pt-[4px]">
          <Group items={['door']} />
          <div className="ml-[25px] flex gap-2">
            <Group items={['starCrate', 'barTray']} />
            <Group items={['okOk', 'boxOff']} />
            <Group items={['folderDown', 'folderUp']} />
            <Group items={['clipMail']} />
            <Group items={['cratePlus', 'cratePair']} />
            <Group items={['xFolder', 'xFolder2']} />
            <Group items={['upOff', 'upX']} />
            <Group items={['xOff', 'crateX']} />
            <Group items={['docDownMachOff', 'docXMachOff']} />
          </div>
          <div className="ml-4"><Group items={['tableWin']} /></div>
        </div>

        <div className="flex h-[36px] shrink-0 gap-2 pl-[1px] pt-[4px]">
          <Group items={['barDocOff', 'barBlankOff', 'folderOff', 'docsArrowOff']} />
          <Group items={['machBoxOff', 'okMachOff', 'carOff']} />
          <Group items={['trayChart', 'trayMach', 'trayStar', 'trayBlank', 'trayEnv']} />
          <Group items={['crateOffX', 'trayX']} />
        </div>

        <div className="flex h-[31px] shrink-0 items-start pl-[1px] pt-[4px]">
          <div className="flex h-[21px] w-[200px] items-center border-t-2 border-l-2 border-r border-b border-t-[#808080] border-l-[#808080] border-r-white border-b-white bg-white font-['Liberation_Sans',sans-serif] text-[11px] text-black">JOB 50</div>
          <div className="ml-[2px] flex h-[21px] w-[55px] items-center border-t-2 border-l-2 border-r border-b border-t-[#808080] border-l-[#808080] border-r-white border-b-white bg-white font-['Liberation_Sans',sans-serif] text-[11px] text-black">1</div>
          <div className="ml-[9px] flex gap-2">
            <Group small items={['sTableA']} />
            <Group small items={['sOrg']} />
            <Group small items={['!sMachBlack', 'sMachBlue']} />
            <Group small items={['sYellow']} />
            <div className="ml-2"><Group small items={['sHidden', 'sHidden2']} /></div>
            <div className="ml-2"><Group small items={['sHidden', 'sCar']} /></div>
          </div>
          <div className="ml-8 flex gap-4">
            <Group small items={['!sTree', 'sGrid', 'sNums', 'sLarge', 'sLinks', 'sList']} />
            <Group small items={['sWin']} />
            <div className="-ml-2"><Group small items={['sDocsOff', 'sXOff']} /></div>
          </div>
        </div>

        <div className="flex h-[43px] shrink-0 items-start border-b-2 border-[#808080] pl-[1px]">
          <Group small items={['sRowA', 'sRowB', 'sRowC', 'sRowD']} />
        </div>

        <div className="flex h-[330px] shrink-0 bg-[#f0f0f0]">
          <div className="flex w-[591px] flex-col border-l-2 border-r border-[#808080]">
            <JobGrid />
            <FileTree />
            <div className="flex h-[23px] shrink-0 items-center border-t-2 border-t-[#c8c8c8] border-b border-b-[#808080] bg-[#f0f0f0] pl-[13px]">
              <FlatBtn d="M3 7l3 4 7-8" />
              <FlatBtn d="M2 7l3 4 7-8M4 7l3 4 7-8" />
              <div className="w-[14px]" />
              <FlatBtn d="M3 7l3 4 7-8" off />
              <FlatBtn d="M3 7l3 4 7-8" off />
            </div>
          </div>
          <div className="ml-[6px] flex-1 border-l-2 border-t-2 border-b border-[#808080] bg-white">
            <div className="relative -mt-[1px]">
              <div className="absolute left-[9px] top-[8px] h-[16px] border-l border-dotted border-[#808080]" />
              <div className="flex h-4 items-center pl-[9px]">
                <div className="h-0 w-[12px] border-t border-dotted border-[#808080]" />
                <svg width="16" height="14" viewBox="0 0 16 14" shapeRendering="crispEdges" className="shrink-0">
                  <Mach x={0} y={0} k={0.7} />
                  <Mach x={8} y={6} k={0.7} />
                </svg>
                <span className="ml-[5px] whitespace-nowrap bg-[#f0f0f0] px-[3px] font-['Liberation_Sans',sans-serif] text-[11px] tracking-[-0.3px] text-[#111]">&lt;&lt;Machines&gt;&gt;</span>
              </div>
              <div className="flex h-4 items-center pl-[9px]">
                <div className="h-0 w-[12px] border-t border-dotted border-[#808080]" />
                <svg width="18" height="16" viewBox="0 0 18 16" shapeRendering="crispEdges" className="shrink-0">
                  <Box x={0} y={0} w={9} h={16} s={RD} />
                  <Box x={9} y={0} w={9} h={16} s={BL} />
                  <Mach x={2} y={2} k={0.45} />
                  <Mach x={2} y={10} k={0.45} />
                  <Mach x={11} y={2} k={0.45} />
                  <Mach x={11} y={10} k={0.45} />
                </svg>
                <span className="ml-[6px] whitespace-nowrap font-['Liberation_Sans',sans-serif] text-[11px] tracking-[-0.3px] text-[#111]">&lt;&lt;Resource Collections&gt;&gt;</span>
              </div>
            </div>
          </div>
        </div>

        <div className="flex flex-1 items-start pl-[2px] pt-[3px]">
          <Cell className="h-[23px] w-[42px]">24 files.</Cell>
        </div>
        <Tip className="left-[371px] top-[130px] h-[19px] w-[143px]">Add Child ShopOperation</Tip>
      </div>
    </div>
  );
}
